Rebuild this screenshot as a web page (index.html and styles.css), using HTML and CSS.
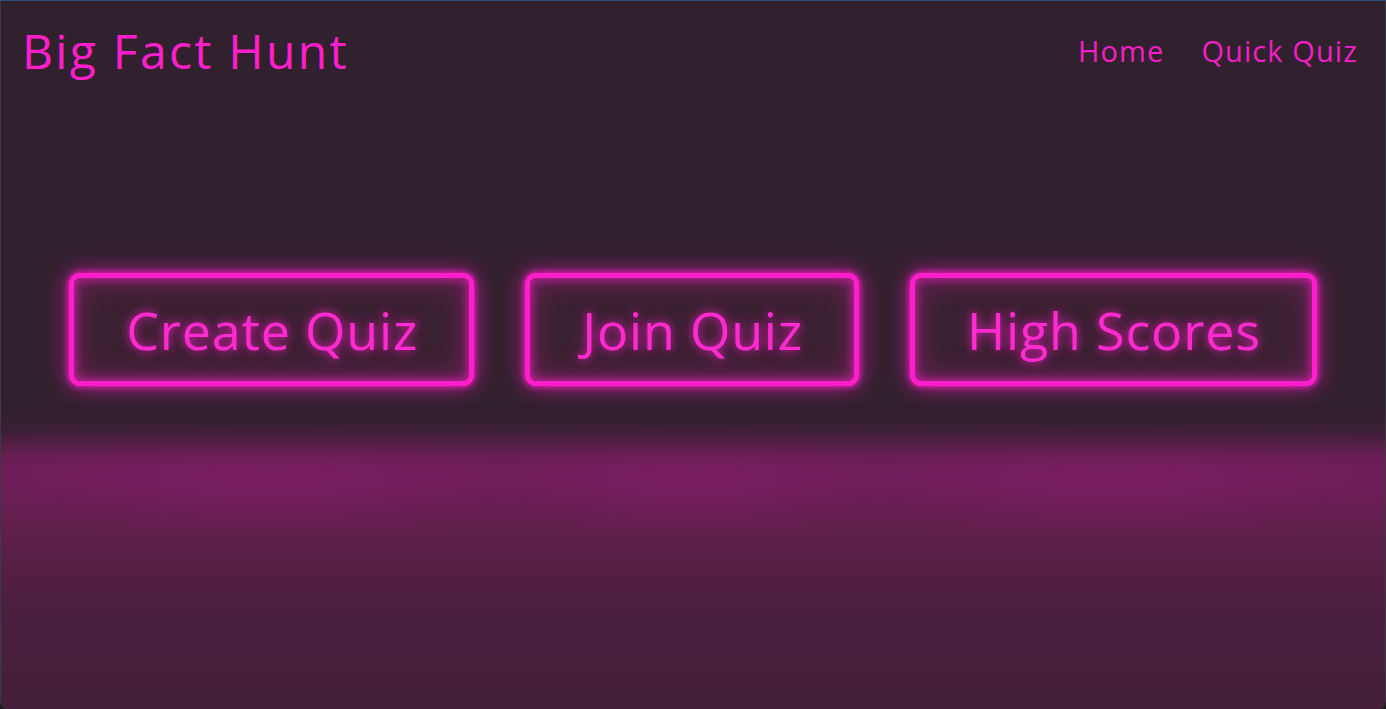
FILE: index.html
```html
<!DOCTYPE html>
<html lang="en">
<head>
<meta charset="utf-8">
<title>Big Fact Hunt</title>
<link rel="stylesheet" href="styles.css">
</head>
<body>
<div class="app">
  <header class="topbar">
    <h1 class="brand">Big Fact Hunt</h1>
    <nav class="nav">
      <a class="nav-link" href="#">Home</a>
      <a class="nav-link" href="#">Quick Quiz</a>
    </nav>
  </header>
  <main class="stage">
    <div class="actions">
      <a class="neon-btn" href="#">Create Quiz</a>
      <a class="neon-btn" href="#">Join Quiz</a>
      <a class="neon-btn" href="#">High Scores</a>
    </div>
    <div class="floor"></div>
  </main>
</div>
</body>
</html>
```

FILE: styles.css
```css
* { box-sizing: border-box; }

html, body {
  margin: 0;
  height: 100%;
  background: #1c1c1f;
}

body {
  font-family: "Open Sans", "DejaVu Sans", sans-serif;
  overflow: hidden;
}

.app {
  height: 709px;
  display: flex;
  flex-direction: column;
  background: #31202d;
  border-top: 1px solid #2f5082;
  border-left: 1px solid #3d3a40;
  border-right: 1px solid #3d3a40;
  border-radius: 0 0 8px 8px;
  overflow: hidden;
  position: relative;
}

.topbar {
  display: flex;
  justify-content: space-between;
  align-items: center;
  padding: 17px 27px 0 21px;
}

.brand {
  margin: 0;
  font-size: 48px;
  font-weight: 400;
  line-height: 66px;
  color: #ff1ecb;
  letter-spacing: 2.3px;
}

.nav {
  display: flex;
  gap: 37px;
}

.nav-link {
  font-size: 29px;
  color: #f21fc6;
  text-decoration: none;
  line-height: 40px;
  letter-spacing: 1.1px;
}

.stage {
  flex: 1;
  position: relative;
  display: flex;
  flex-direction: column;
}

.actions {
  display: flex;
  justify-content: center;
  gap: 51px;
  margin-top: 189px;
  position: relative;
  z-index: 2;
}

.neon-btn {
  display: block;
  padding: 18px 51px 18px 52px;
  border: 5px solid #ff1ecb;
  border-radius: 11px;
  font-size: 52px;
  line-height: 67px;
  letter-spacing: 0.8px;
  color: #ff2bd0;
  text-decoration: none;
  background: #3a2131;
  box-shadow: 0 0 6px 1px rgba(255, 30, 203, 0.9), 0 0 22px 4px rgba(255, 30, 203, 0.45), inset 0 0 8px 2px rgba(255, 30, 203, 0.6), inset 0 0 26px 6px rgba(255, 30, 203, 0.25);
  text-shadow: 0 0 8px rgba(255, 30, 203, 0.8), 0 0 18px rgba(255, 30, 203, 0.4);
}

.floor {
  position: absolute;
  left: -80px;
  right: -80px;
  top: 360px;
  bottom: -80px;
  background:
    radial-gradient(ellipse 260px 60px at 350px 30px, rgba(140, 30, 110, 0.5), transparent),
    radial-gradient(ellipse 200px 60px at 772px 30px, rgba(140, 30, 110, 0.5), transparent),
    radial-gradient(ellipse 260px 60px at 1192px 30px, rgba(140, 30, 110, 0.5), transparent),
    linear-gradient(to bottom, #7a1e60 0%, #711e5a 10%, #5e1f4b 26%, #4d1f40 45%, #45203a 70%, #42203a 100%);
  filter: blur(16px);
  z-index: 1;
}
```
